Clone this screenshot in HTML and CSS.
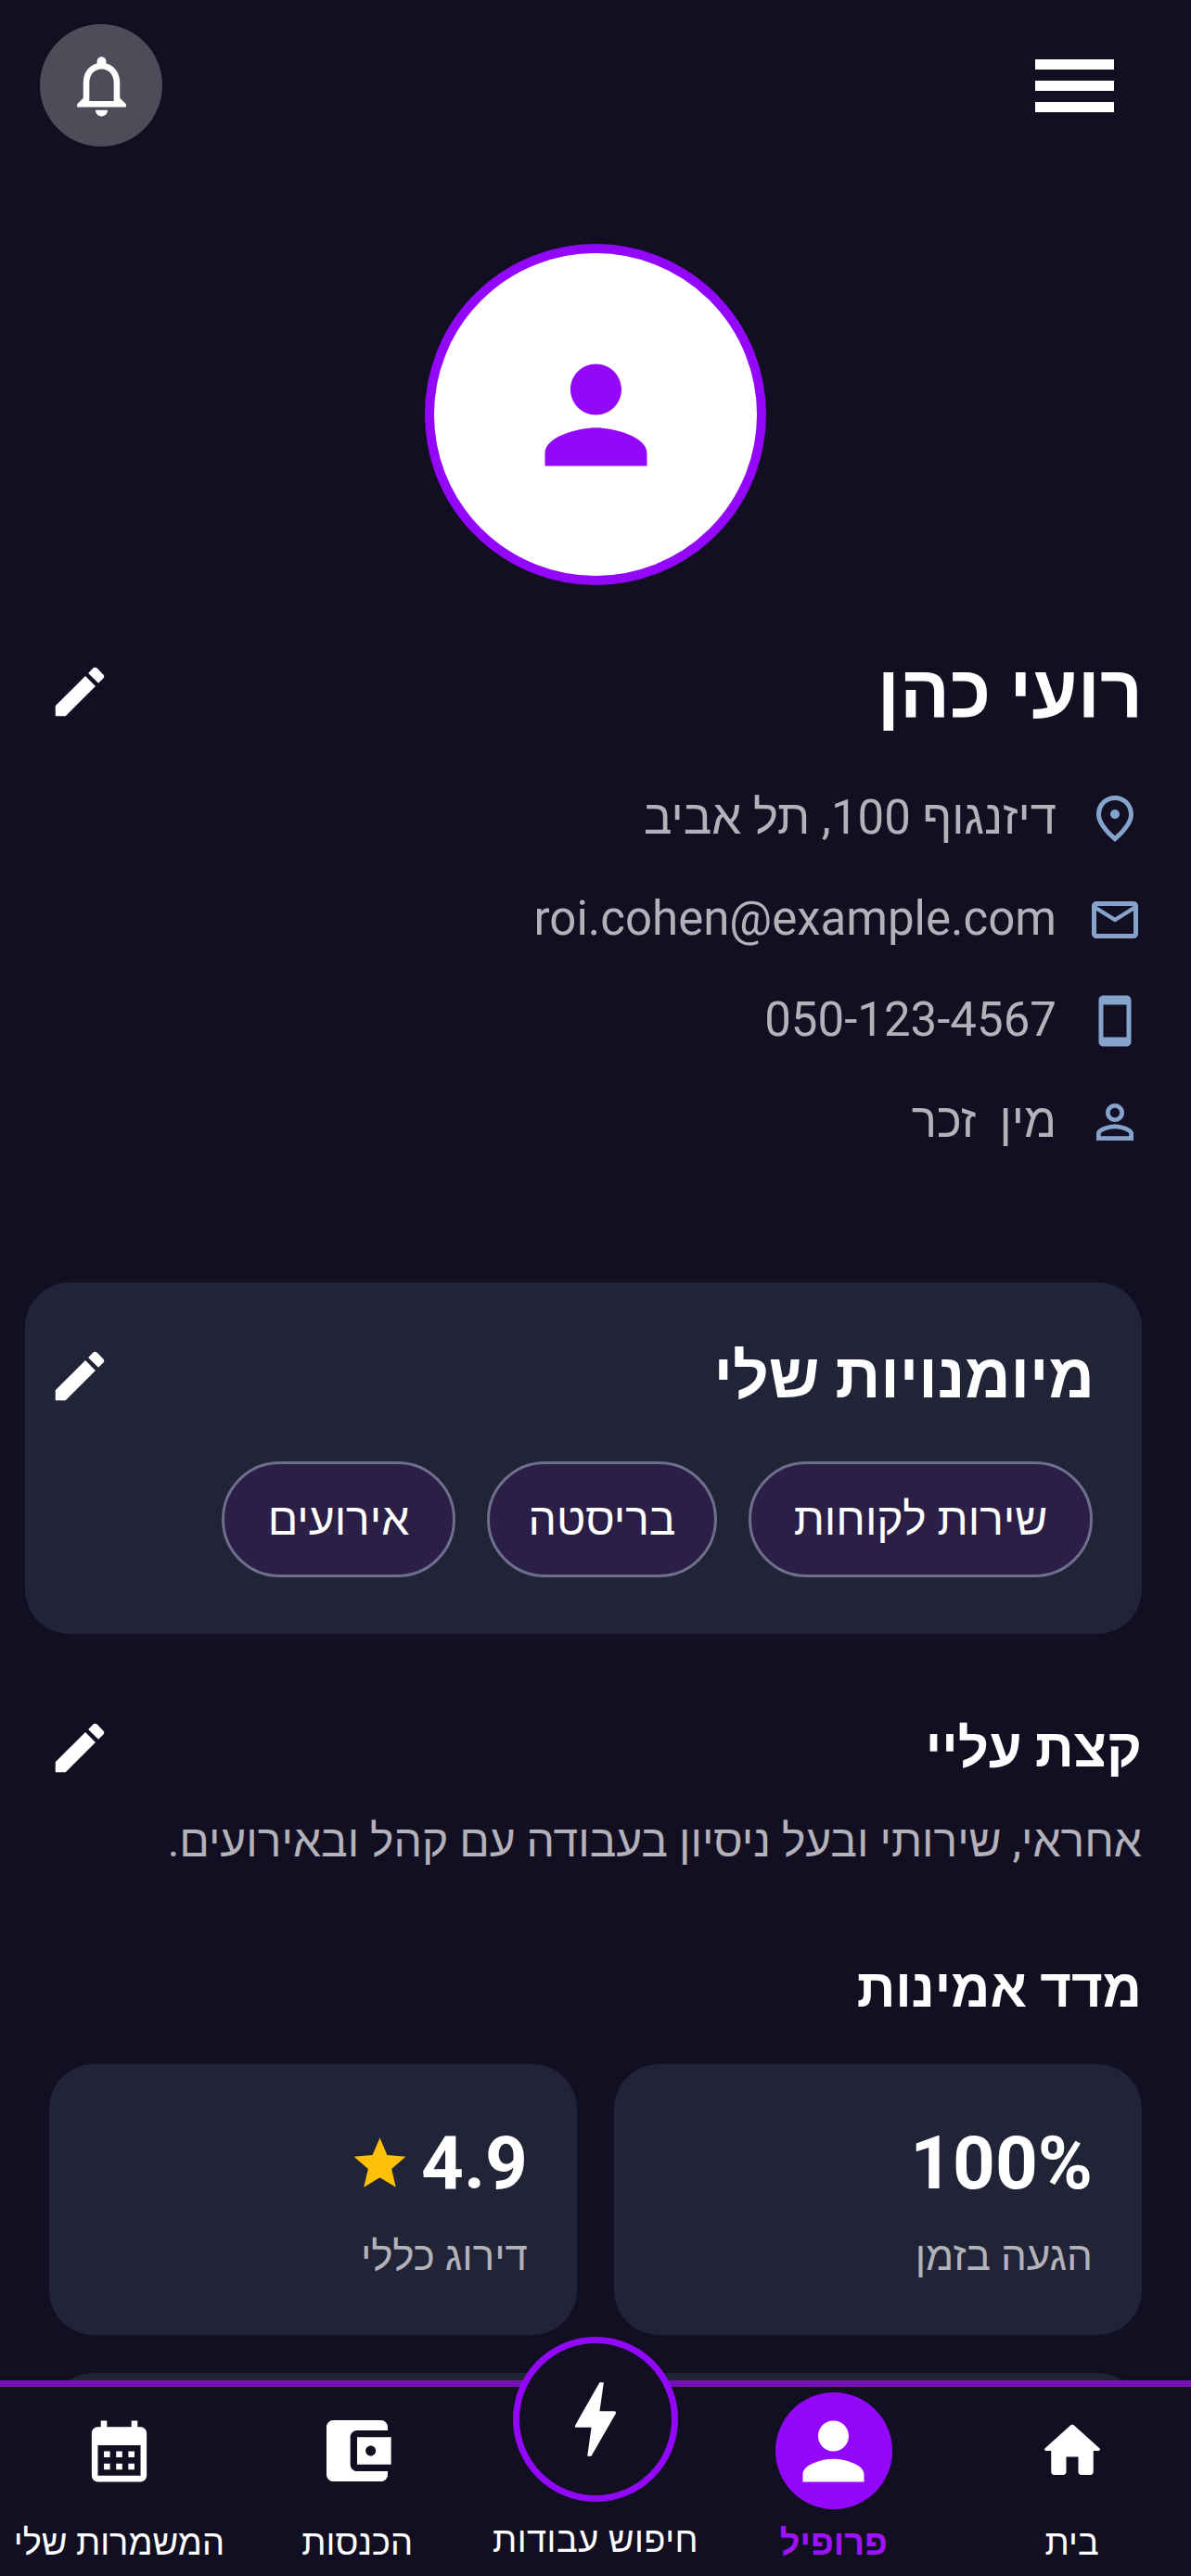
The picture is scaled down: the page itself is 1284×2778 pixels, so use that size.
FILE: index.html
```html
<!DOCTYPE html>
<html lang="he" dir="rtl">
<head>
  <meta charset="utf-8">
  <title>פרופיל</title>
  <link rel="stylesheet" href="styles.css">
</head>
<body>
  <div class="page">
    <header class="topbar">
      <div class="menu"><span></span><span></span><span></span></div>
      <div class="bell">
        <svg class="bell-icon" viewBox="0 0 24 24"><path d="M12 22c1.1 0 2-.9 2-2h-4c0 1.1.9 2 2 2zm6-6v-5c0-3.07-1.63-5.64-4.5-6.32V4c0-.83-.67-1.5-1.5-1.5s-1.5.67-1.5 1.5v.68C7.64 5.36 6 7.92 6 11v5l-2 2v1h16v-1l-2-2zm-2 1H8v-6c0-2.48 1.51-4.5 4-4.5s4 2.02 4 4.5v6z"/></svg>
      </div>
    </header>

    <div class="avatar">
      <svg class="avatar-icon" viewBox="0 0 24 24"><path d="M12 12c2.21 0 4-1.79 4-4s-1.79-4-4-4-4 1.79-4 4 1.79 4 4 4zm0 2c-2.67 0-8 1.34-8 4v2h16v-2c0-2.66-5.33-4-8-4z"/></svg>
    </div>

    <section class="profile">
      <div class="title-row">
        <h1 class="name">רועי כהן</h1>
        <svg class="edit" viewBox="0 0 24 24"><path d="M3 17.25V21h3.75L17.81 9.94l-3.75-3.75L3 17.25zM20.71 7.04c.39-.39.39-1.02 0-1.41l-2.34-2.34c-.39-.39-1.02-.39-1.41 0l-1.83 1.83 3.75 3.75 1.83-1.83z"/></svg>
      </div>
      <ul class="info">
        <li class="info-row">
          <svg class="info-icon" viewBox="0 0 24 24"><path d="M12 12c-1.1 0-2-.9-2-2s.9-2 2-2 2 .9 2 2-.9 2-2 2zm6-1.8C18 6.57 15.35 4 12 4s-6 2.57-6 6.2c0 2.34 1.95 5.44 6 9.14 4.05-3.7 6-6.8 6-9.14zM12 2c4.2 0 8 3.22 8 8.2 0 3.32-2.67 7.25-8 11.8-5.33-4.55-8-8.48-8-11.8C4 5.22 7.8 2 12 2z"/></svg>
          <span>דיזנגוף 100, תל אביב</span>
        </li>
        <li class="info-row">
          <svg class="info-icon" viewBox="0 0 24 24"><path d="M20 4H4c-1.1 0-2 .9-2 2v12c0 1.1.9 2 2 2h16c1.1 0 2-.9 2-2V6c0-1.1-.9-2-2-2zm0 14H4V8l8 5 8-5v10zm-8-7L4 6h16l-8 5z"/></svg>
          <span>roi.cohen@example.com</span>
        </li>
        <li class="info-row">
          <svg class="info-icon" viewBox="0 0 24 24"><path d="M17 1.01L7 1c-1.1 0-2 .9-2 2v18c0 1.1.9 2 2 2h10c1.1 0 2-.9 2-2V3c0-1.1-.9-1.99-2-1.99zM17 19H7V5h10v14z"/></svg>
          <span dir="ltr">050-123-4567</span>
        </li>
        <li class="info-row">
          <svg class="info-icon" viewBox="0 0 24 24"><path d="M12 5.9c1.16 0 2.1.94 2.1 2.1s-.94 2.1-2.1 2.1S9.9 9.16 9.9 8s.94-2.1 2.1-2.1m0 9c2.97 0 6.1 1.46 6.1 2.1v1.1H5.9V17c0-.64 3.13-2.1 6.1-2.1M12 4C9.79 4 8 5.79 8 8s1.79 4 4 4 4-1.79 4-4-1.79-4-4-4zm0 9c-2.67 0-8 1.34-8 4v3h16v-3c0-2.66-5.33-4-8-4z"/></svg>
          <span>מין&nbsp; זכר</span>
        </li>
      </ul>
    </section>

    <section class="skills">
      <div class="title-row">
        <h2 class="skills-title">מיומנויות שלי</h2>
        <svg class="edit" viewBox="0 0 24 24"><path d="M3 17.25V21h3.75L17.81 9.94l-3.75-3.75L3 17.25zM20.71 7.04c.39-.39.39-1.02 0-1.41l-2.34-2.34c-.39-.39-1.02-.39-1.41 0l-1.83 1.83 3.75 3.75 1.83-1.83z"/></svg>
      </div>
      <div class="pills">
        <span class="pill">שירות לקוחות</span>
        <span class="pill">בריסטה</span>
        <span class="pill">אירועים</span>
      </div>
    </section>

    <section class="about">
      <div class="title-row">
        <h2 class="section-title">קצת עליי</h2>
        <svg class="edit" viewBox="0 0 24 24"><path d="M3 17.25V21h3.75L17.81 9.94l-3.75-3.75L3 17.25zM20.71 7.04c.39-.39.39-1.02 0-1.41l-2.34-2.34c-.39-.39-1.02-.39-1.41 0l-1.83 1.83 3.75 3.75 1.83-1.83z"/></svg>
      </div>
      <p class="about-text">אחראי, שירותי ובעל ניסיון בעבודה עם קהל ובאירועים.</p>
    </section>

    <section class="trust">
      <h2 class="section-title">מדד אמינות</h2>
      <div class="stats">
        <div class="stat">
          <div class="stat-value">100%</div>
          <div class="stat-label">הגעה בזמן</div>
        </div>
        <div class="stat">
          <div class="stat-value">
            4.9
            <svg class="star" viewBox="0 0 24 24"><path d="M12 17.27L18.18 21l-1.64-7.03L22 9.24l-7.19-.61L12 2 9.19 8.63 2 9.24l5.46 4.73L5.82 21z"/></svg>
          </div>
          <div class="stat-label">דירוג כללי</div>
        </div>
        <div class="stat"></div>
        <div class="stat"></div>
      </div>
    </section>

    <nav class="bottom-nav">
      <a class="nav-item">
        <div class="nav-icon">
          <svg class="home-icon" viewBox="0 0 24 24"><path d="M10 19v-5h4v5c0 .55.45 1 1 1h3c.55 0 1-.45 1-1v-7h1.7c.46 0 .68-.57.33-.87L12.67 3.6c-.38-.34-.96-.34-1.34 0l-8.36 7.53c-.34.3-.13.87.33.87H5v7c0 .55.45 1 1 1h3c.55 0 1-.45 1-1z"/></svg>
        </div>
        <span>בית</span>
      </a>
      <a class="nav-item active">
        <div class="nav-icon">
          <svg class="person-icon" viewBox="0 0 24 24"><path d="M12 12c2.21 0 4-1.79 4-4s-1.79-4-4-4-4 1.79-4 4 1.79 4 4 4zm0 2c-2.67 0-8 1.34-8 4v2h16v-2c0-2.66-5.33-4-8-4z"/></svg>
        </div>
        <span>פרופיל</span>
      </a>
      <a class="nav-item center">
        <div class="nav-icon">
          <svg class="bolt-icon" viewBox="0 0 24 24"><path d="M11 21h-1l1-7H7.5c-.88 0-.33-.75-.31-.78C8.48 10.94 10.42 7.54 13.01 3h1l-1 7h3.51c.4 0 .62.19.4.66C12.97 17.55 11 21 11 21z"/></svg>
        </div>
        <span>חיפוש עבודות</span>
      </a>
      <a class="nav-item">
        <div class="nav-icon">
          <svg class="wallet-icon" viewBox="0 0 24 24"><path d="M21 18v1c0 1.1-.9 2-2 2H5c-1.11 0-2-.9-2-2V5c0-1.1.89-2 2-2h14c1.1 0 2 .9 2 2v1h-9c-1.11 0-2 .9-2 2v8c0 1.1.89 2 2 2h9zm-9-2h10V8H12v8zm4-2.5c-.83 0-1.5-.67-1.5-1.5s.67-1.5 1.5-1.5 1.5.67 1.5 1.5-.67 1.5-1.5 1.5z"/></svg>
        </div>
        <span>הכנסות</span>
      </a>
      <a class="nav-item">
        <div class="nav-icon">
          <svg class="calendar-icon" viewBox="0 0 24 24"><path d="M19 4h-1V2h-2v2H8V2H6v2H5c-1.1 0-2 .9-2 2v14c0 1.1.9 2 2 2h14c1.1 0 2-.9 2-2V6c0-1.1-.9-2-2-2zm0 16H5V10h14v10zM7 12h2v2H7zm4 0h2v2h-2zm4 0h2v2h-2zm-8 4h2v2H7zm4 0h2v2h-2zm4 0h2v2h-2z"/></svg>
        </div>
        <span>המשמרות שלי</span>
      </a>
    </nav>
  </div>
</body>
</html>
```

FILE: styles.css
```css
* {
  box-sizing: border-box;
}

html, body {
  margin: 0;
  padding: 0;
}

body {
  font-family: Roboto, "Noto Sans", sans-serif;
  background: #130f23;
  color: #ffffff;
}

h1, h2, p, ul {
  margin: 0;
  padding: 0;
}

svg {
  display: block;
  fill: currentColor;
  flex-shrink: 0;
}

.page {
  position: relative;
  height: 2778px;
  overflow: hidden;
  background: #130f23;
}

/* top bar */
.topbar {
  display: flex;
  justify-content: space-between;
  align-items: center;
  padding: 26px 83px 0 43px;
}

.menu {
  display: flex;
  flex-direction: column;
  gap: 12px;
  width: 85px;
}

.menu span {
  display: block;
  height: 11px;
  background: #ffffff;
}

.bell {
  width: 132px;
  height: 132px;
  border-radius: 50%;
  background: #4f4c5a;
  display: flex;
  align-items: center;
  justify-content: center;
}

.bell-icon {
  width: 79px;
  height: 79px;
}

.avatar {
  width: 368px;
  height: 368px;
  margin: 105px auto 0;
  border: 10px solid #9308fb;
  border-radius: 50%;
  background: #ffffff;
  color: #9308fb;
  display: flex;
  align-items: center;
  justify-content: center;
}

.avatar-icon {
  width: 165px;
  height: 165px;
}

/* name and details */
.profile {
  padding: 67px 52px 0 51px;
}

.title-row {
  display: flex;
  justify-content: space-between;
  align-items: center;
}

.edit {
  width: 70px;
  height: 70px;
}

.name {
  font-size: 80px;
  line-height: 96px;
  font-weight: 700;
}

.info {
  list-style: none;
  margin-top: 59px;
}

.info-row {
  display: flex;
  align-items: center;
  gap: 33px;
  height: 60px;
  margin-bottom: 49px;
  font-size: 51px;
  color: #b3b1b9;
}

.info-row span {
  margin-bottom: 3px;
}

.info-icon {
  width: 60px;
  height: 60px;
  color: #86a3cb;
}

/* skills */
.skills {
  margin: 143px 53px 0 27px;
  padding: 59px 51px 61px 24px;
  background: #212437;
  border-radius: 48px;
}

.skills-title {
  font-size: 68px;
  line-height: 84px;
  font-weight: 700;
}

.pills {
  display: flex;
  gap: 34px;
  margin-top: 50px;
  padding-right: 2px;
}

.pill {
  height: 125px;
  display: flex;
  align-items: center;
  justify-content: center;
  background: #2b1f47;
  border: 3px solid #6f6e8c;
  border-radius: 63px;
  font-size: 48px;
}

.pill:nth-child(1) {
  width: 371px;
}

.pill:nth-child(2) {
  width: 248px;
}

.pill:nth-child(3) {
  width: 252px;
}

/* about */
.about {
  padding: 85px 53px 0 51px;
}

.section-title {
  font-size: 58px;
  line-height: 76px;
  font-weight: 700;
}

.about-text {
  margin-top: 31px;
  font-size: 48px;
  line-height: 64px;
  color: #b3b1b9;
}

/* trust */
.trust {
  padding: 88px 53px 0 53px;
}

.stats {
  display: grid;
  grid-template-columns: 1fr 1fr;
  gap: 41px 40px;
  margin-top: 44px;
}

.stat {
  height: 292px;
  padding: 60px 53px 0;
  background: #212437;
  border-radius: 48px;
}

.stat-value {
  display: flex;
  align-items: center;
  gap: 11px;
  font-size: 80px;
  line-height: 94px;
  font-weight: 700;
}

.star {
  width: 67px;
  height: 67px;
  color: #ffc107;
}

.stat-label {
  margin-top: 25px;
  font-size: 44px;
  line-height: 56px;
  color: #b3b1b9;
}

/* bottom nav */
.bottom-nav {
  position: absolute;
  right: 0;
  bottom: 0;
  left: 0;
  height: 211px;
  display: flex;
  background: #130f23;
  border-top: 7px solid #7511b5;
}

.nav-item {
  flex: 1;
  display: flex;
  flex-direction: column;
  align-items: center;
  padding-top: 6px;
  font-size: 38px;
  font-weight: 500;
  color: #ffffff;
  white-space: nowrap;
}

.nav-icon {
  width: 126px;
  height: 126px;
  margin-bottom: 14px;
  display: flex;
  align-items: center;
  justify-content: center;
}

.active {
  color: #9d14fb;
  font-weight: 700;
}

.active .nav-icon {
  background: #9308fb;
  border-radius: 50%;
  color: #ffffff;
}

.center {
  margin-top: -60px;
  letter-spacing: 0.5px;
}

.center .nav-icon {
  width: 178px;
  height: 178px;
  margin-bottom: 19px;
  background: #130f23;
  border: 7px solid #9308fb;
  border-radius: 50%;
}

.home-icon {
  width: 78px;
  height: 78px;
}

.person-icon {
  width: 99px;
  height: 99px;
}

.bolt-icon {
  width: 106px;
  height: 106px;
}

.wallet-icon {
  width: 88px;
  height: 88px;
}

.calendar-icon {
  width: 79px;
  height: 79px;
}
```
